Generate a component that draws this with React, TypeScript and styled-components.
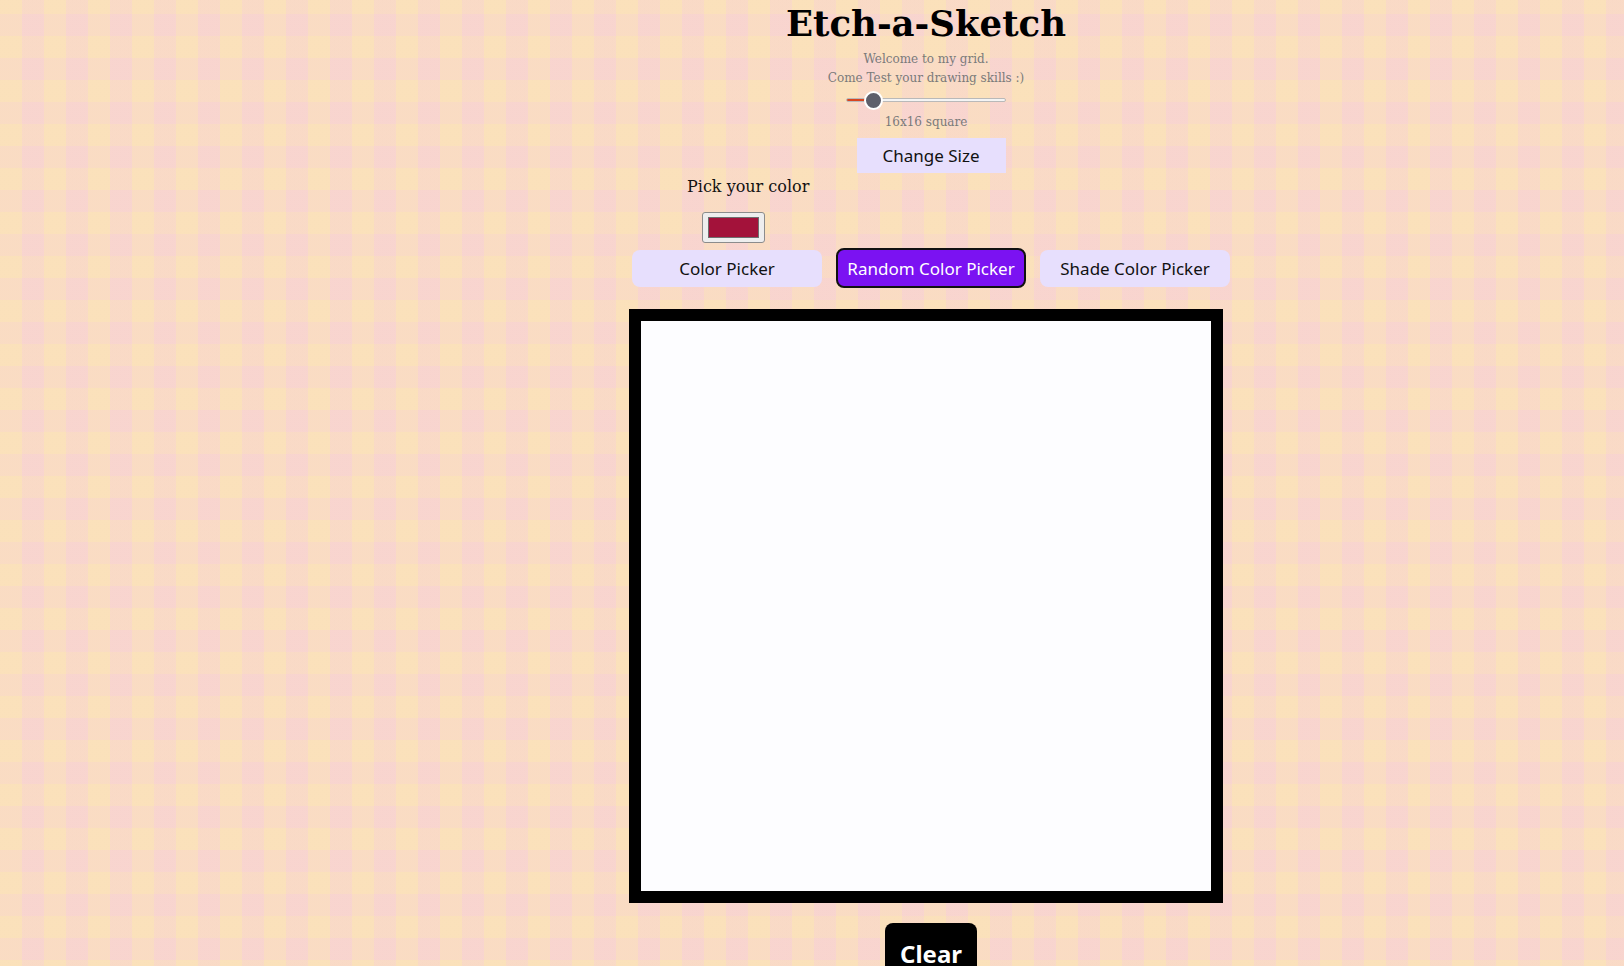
import React, { useState } from "react";
import styled, { createGlobalStyle } from "styled-components";

const GlobalStyle = createGlobalStyle`
  html, body {
    margin: 0;
    padding: 0;
    scrollbar-width: none;
  }
  ::-webkit-scrollbar { display: none; }
  body {
    font-family: "DejaVu Serif", serif;
    background-color: #f9dbc5;
    background-image:
      repeating-linear-gradient(90deg, rgba(255, 240, 160, 0.16) 0 22px, rgba(246, 196, 232, 0.16) 22px 44px),
      repeating-linear-gradient(0deg, rgba(255, 240, 160, 0.14) 0 22px, rgba(246, 196, 232, 0.14) 22px 44px);
  }
`;

const Page = styled.main`
  display: flex;
  flex-direction: column;
  align-items: center;
  padding-left: 228px;
  min-height: 100vh;
  box-sizing: border-box;
`;

const Title = styled.h1`
  margin: 3px 0 0;
  font-family: "DejaVu Serif", serif;
  font-weight: 700;
  font-size: 35.5px;
  line-height: 42px;
  color: #000;
`;

const Intro = styled.div`
  margin-top: 5px;
  display: flex;
  flex-direction: column;
  align-items: center;
`;

const Note = styled.p`
  margin: 0;
  font-family: "DejaVu Serif", serif;
  font-size: 12px;
  line-height: 19px;
  color: #7a7a7a;
`;

const Range = styled.input<{ $fill: number }>`
  -webkit-appearance: none;
  appearance: none;
  width: 160px;
  height: 20px;
  margin: 2px 0 3px;
  background: transparent;
  cursor: pointer;

  &::-webkit-slider-runnable-track {
    height: 4px;
    border-radius: 3px;
    border: 1px solid #b9b9b9;
    background: linear-gradient(
      to right,
      #d8451f 0,
      #d8451f ${(p) => p.$fill}%,
      #f4f4f4 ${(p) => p.$fill}%,
      #f4f4f4 100%
    );
  }
  &::-webkit-slider-thumb {
    -webkit-appearance: none;
    appearance: none;
    width: 19px;
    height: 19px;
    margin-top: -8px;
    border-radius: 50%;
    background: #5e5f6b;
    border: 2px solid #ffffff;
    box-sizing: border-box;
  }
`;

const PillButton = styled.button<{ $active?: boolean }>`
  margin: 0 0 0 10px;
  padding: 0;
  box-sizing: border-box;
  white-space: nowrap;
  font-family: "Noto Sans", sans-serif;
  font-size: 17px;
  color: ${(p) => (p.$active ? "#ffffff" : "#111111")};
  background: ${(p) => (p.$active ? "#7b12f2" : "#e7dffd")};
  border: ${(p) => (p.$active ? "2px solid #111" : "none")};
  border-radius: 8px;
  cursor: pointer;
`;

const SizeButton = styled(PillButton)`
  margin-top: 6px;
  width: 149px;
  height: 35px;
  border-radius: 0;
`;

const ColorSection = styled.section`
  margin: 4px 0 0 10px;
  width: 598px;
  display: flex;
  flex-direction: column;
  align-items: flex-start;
`;

const ColorLabel = styled.p`
  margin: 0 0 0 55px;
  font-family: "DejaVu Serif", serif;
  font-size: 16px;
  line-height: 20px;
  color: #111;
`;

const ColorInput = styled.input`
  -webkit-appearance: none;
  appearance: none;
  margin: 15px 0 0 70px;
  width: 63px;
  height: 31px;
  padding: 0;
  box-sizing: border-box;
  border: 1px solid #8c8c8c;
  border-radius: 3px;
  background: #eeeeee;
  cursor: pointer;

  &::-webkit-color-swatch-wrapper {
    padding: 4px 5px;
  }
  &::-webkit-color-swatch {
    border: 1px solid #6f6f6f;
    border-radius: 0;
  }
`;

const ModeRow = styled.div`
  margin: 5px 0 0 0;
  display: flex;
  align-items: center;
  gap: 14px;
`;

const ModeButton = styled(PillButton)`
  margin: 0;
  width: 190px;
  height: ${(p) => (p.$active ? "40px" : "37px")};
`;

const Board = styled.div<{ $size: number }>`
  margin-top: 21px;
  width: 570px;
  height: 570px;
  border: 12px solid #000;
  display: grid;
  grid-template-columns: repeat(${(p) => p.$size}, 1fr);
  grid-template-rows: repeat(${(p) => p.$size}, 1fr);
  background: #fdfdff;
`;

const Cell = styled.div`
  background: #fdfdff;
`;

const ClearButton = styled.button`
  margin: 20px 0 0 10px;
  width: 92px;
  padding: 14px 0 12px;
  font-family: "Noto Sans", sans-serif;
  font-weight: 700;
  font-size: 24px;
  color: #fff;
  background: #000;
  border: none;
  border-radius: 8px;
  cursor: pointer;
`;

export default function App() {
  const [size, setSize] = useState(16);
  const [color, setColor] = useState("#a3123a");
  const [mode, setMode] = useState("random");
  const max = 128;

  return (
    <>
      <GlobalStyle />
      <Page>
        <Title>Etch-a-Sketch</Title>
        <Intro>
          <Note>Welcome to my grid.</Note>
          <Note>Come Test your drawing skills :)</Note>
          <Range
            type="range"
            min={0}
            max={max}
            value={size}
            $fill={(size / max) * 100 + 1}
            onChange={(e) => setSize(Number(e.target.value))}
          />
          <Note>
            {size}x{size} square
          </Note>
        </Intro>
        <SizeButton>Change Size</SizeButton>
        <ColorSection>
          <ColorLabel>Pick your color</ColorLabel>
          <ColorInput
            type="color"
            value={color}
            onChange={(e) => setColor(e.target.value)}
          />
          <ModeRow>
            <ModeButton $active={mode === "picker"} onClick={() => setMode("picker")}>
              Color Picker
            </ModeButton>
            <ModeButton $active={mode === "random"} onClick={() => setMode("random")}>
              Random Color Picker
            </ModeButton>
            <ModeButton $active={mode === "shade"} onClick={() => setMode("shade")}>
              Shade Color Picker
            </ModeButton>
          </ModeRow>
        </ColorSection>
        <Board $size={16}>
          {Array.from({ length: 256 }, (_, i) => (
            <Cell key={i} />
          ))}
        </Board>
        <ClearButton>Clear</ClearButton>
      </Page>
    </>
  );
}
